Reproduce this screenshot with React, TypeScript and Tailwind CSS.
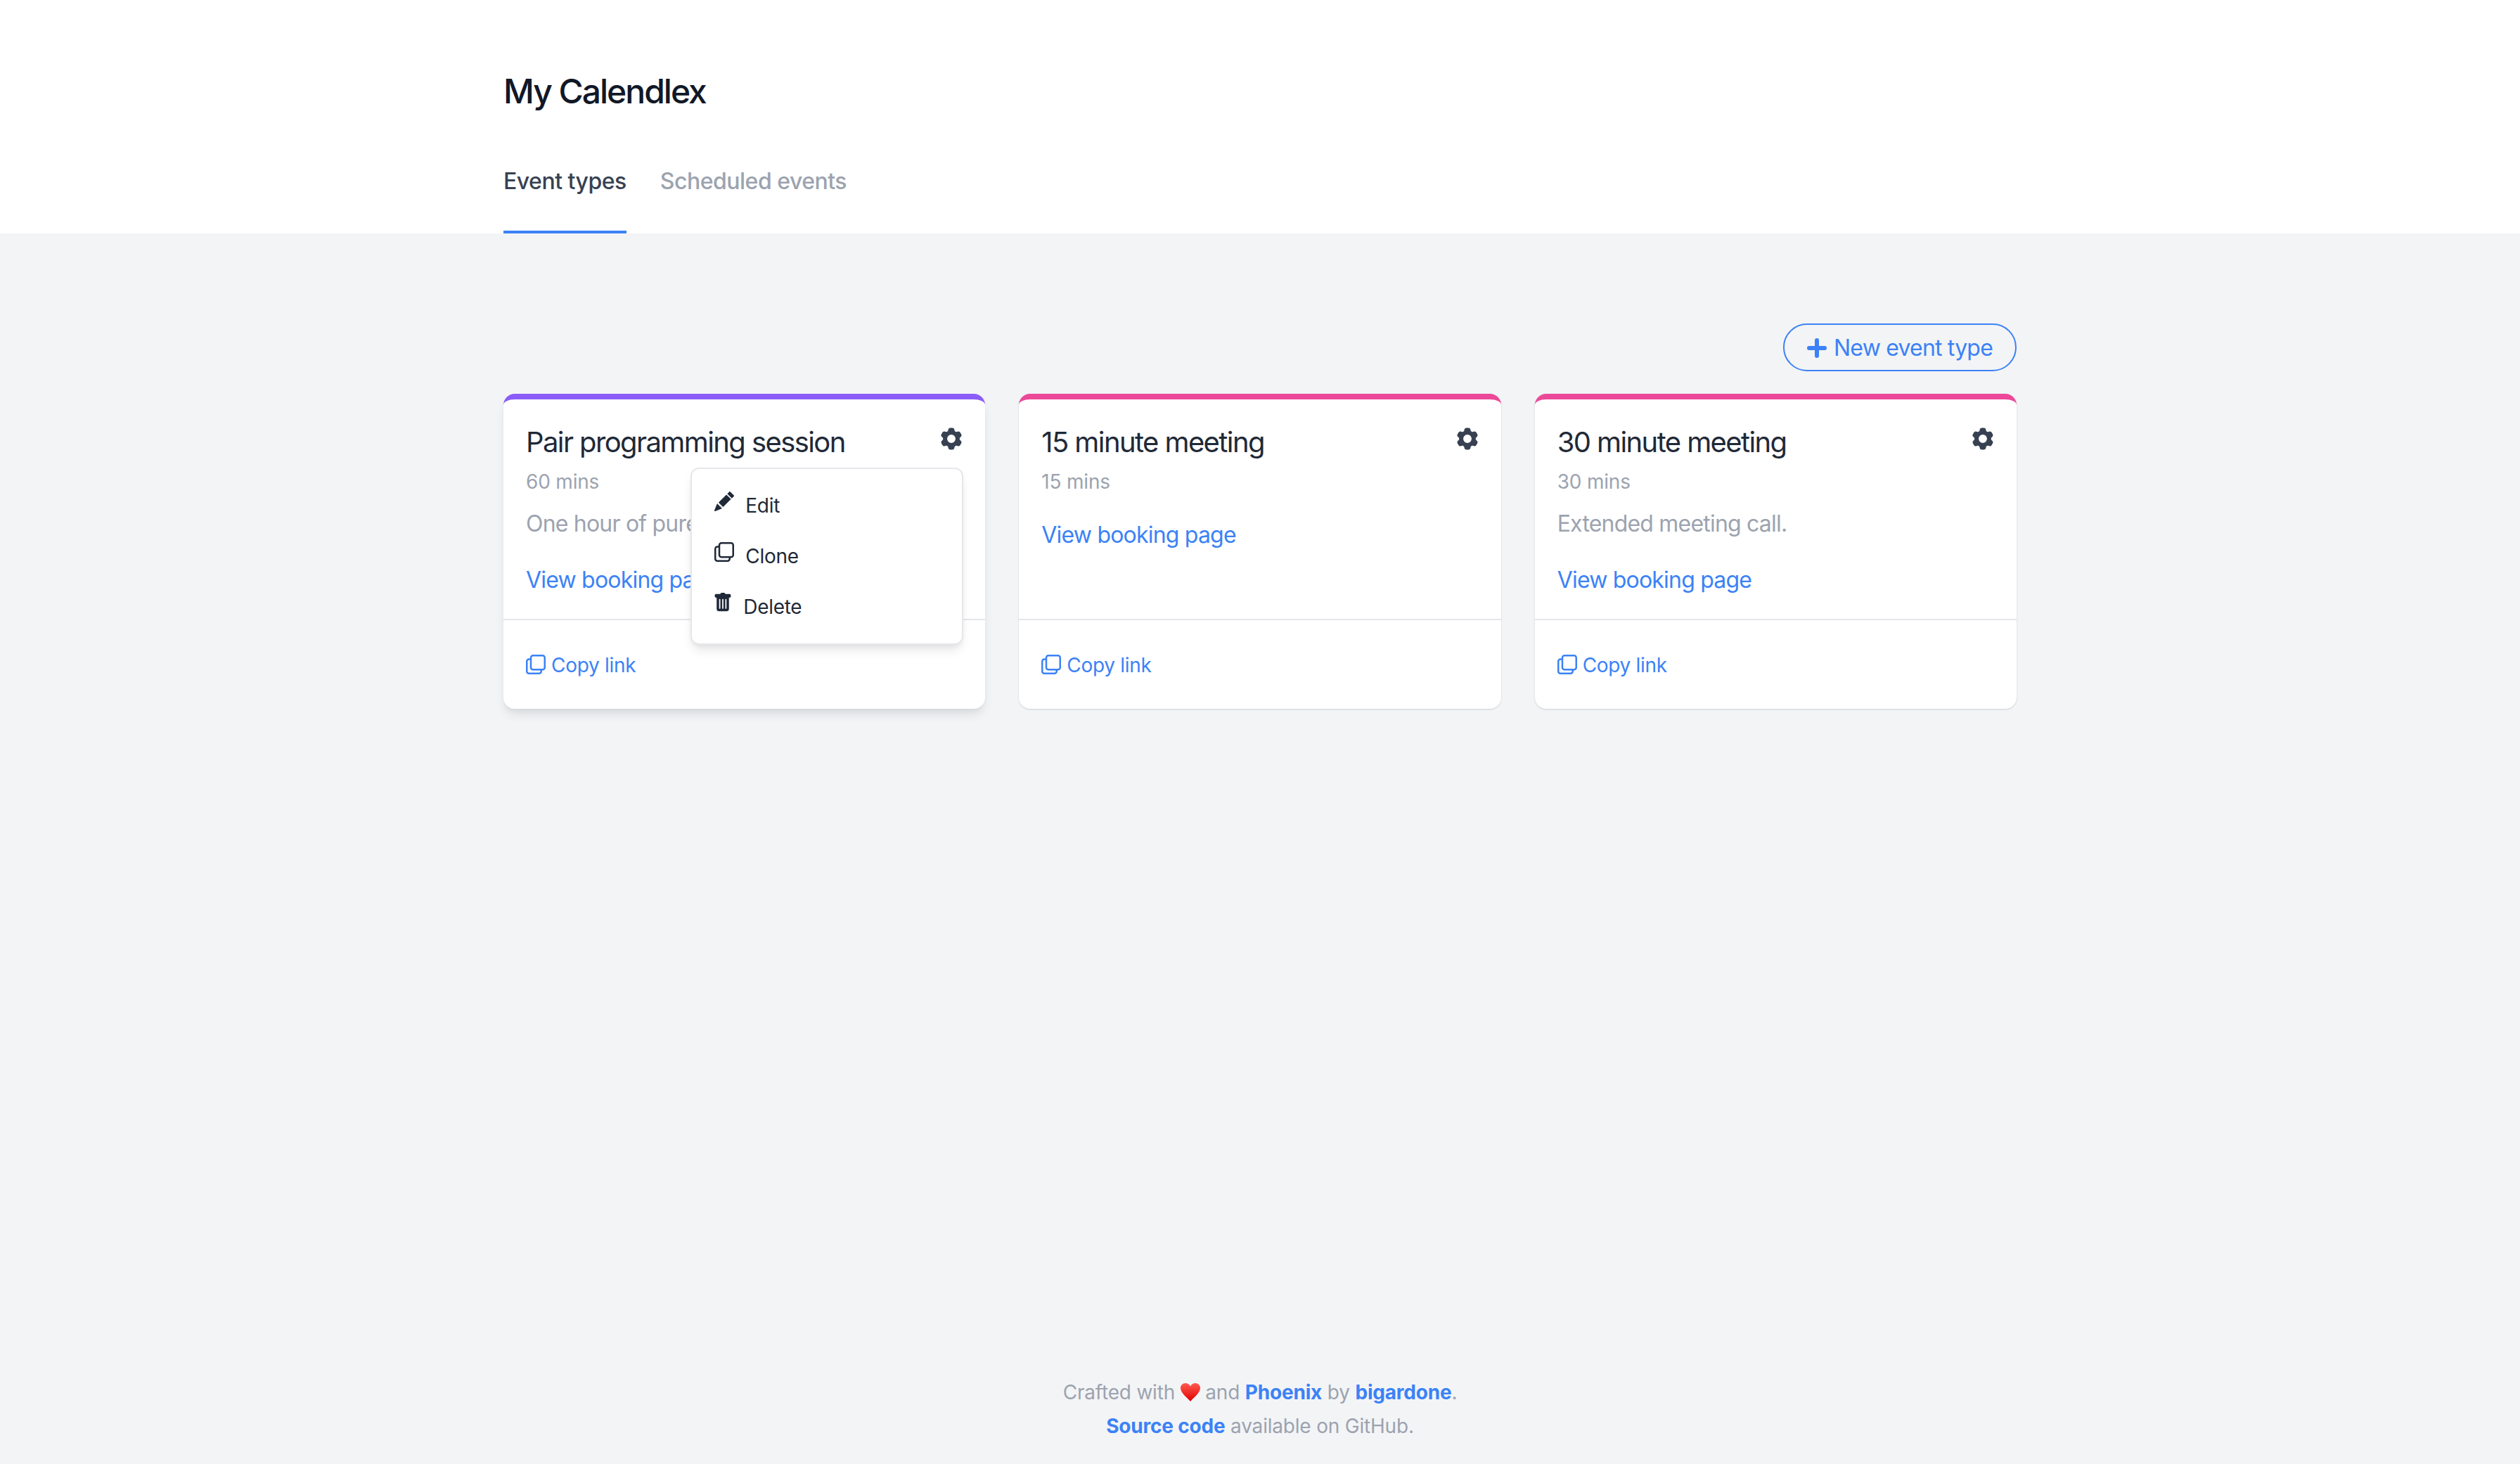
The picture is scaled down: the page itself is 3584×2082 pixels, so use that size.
import { BsPencilFill, BsTrashFill } from 'react-icons/bs'
import { HiCog6Tooth } from 'react-icons/hi2'

const eventTypes = [
  {
    name: 'Pair programming session',
    duration: '60 mins',
    description: 'One hour of pure pair programming.',
    border: 'border-[#8b5cf6]',
    open: true,
  },
  { name: '15 minute meeting', duration: '15 mins', border: 'border-[#ec4899]' },
  {
    name: '30 minute meeting',
    duration: '30 mins',
    description: 'Extended meeting call.',
    border: 'border-[#ec4899]',
  },
]

function CopyIcon() {
  return (
    <svg viewBox="0 0 28 28" fill="none" stroke="currentColor" strokeWidth="2.5" className="w-[28px] h-[28px] shrink-0">
      <rect x="7" y="1.250" width="19.750" height="20" rx="3" />
      <path d="M7 6.500H4.250a3 3 0 0 0-3 3v14.250a3 3 0 0 0 3 3h14.500a3 3 0 0 0 3-3V21.250" />
    </svg>
  )
}

function PlusIcon() {
  return (
    <svg viewBox="0 0 28 28" fill="currentColor" className="w-[28px] h-[28px] shrink-0">
      <path d="M14 0a3 3 0 0 1 3 3v8h8a3 3 0 0 1 0 6h-8v8a3 3 0 0 1-6 0v-8H3a3 3 0 0 1 0-6h8V3a3 3 0 0 1 3-3z" />
    </svg>
  )
}

function Heart() {
  return (
    <svg viewBox="0 0 28 26" className="inline-block w-[28px] h-[26px] align-[-3px]">
      <defs>
        <linearGradient id="heart" x1="0" y1="0" x2="0" y2="1">
          <stop offset="0" stopColor="#ff5a4f" />
          <stop offset="1" stopColor="#e00000" />
        </linearGradient>
      </defs>
      <path
        d="M14 26C9 20 0 14 0 7C0 3 3 0 7 0C10 0 12.500 1.500 14 4.500C15.500 1.500 18 0 21 0C25 0 28 3 28 7C28 14 19 20 14 26Z"
        fill="url(#heart)"
      />
    </svg>
  )
}

function Menu() {
  return (
    <div className="absolute top-[97px] right-[31px] w-[388px] py-4 bg-white rounded-xl border-2 border-[#e5e7eb] shadow-[0_10px_15px_-3px_rgba(0,0,0,0.1),0_4px_6px_-2px_rgba(0,0,0,0.05)] text-[28px] leading-[40px] tracking-[-0.3px] text-[#1f2937]">
      <div className="flex items-start gap-4 px-8 py-4">
        <BsPencilFill className="w-[28px] h-[28px]" />
        <span>Edit</span>
      </div>
      <div className="flex items-start gap-4 px-8 py-4">
        <CopyIcon />
        <span>Clone</span>
      </div>
      <div className="flex items-start gap-[15px] px-8 py-4">
        <BsTrashFill className="w-[28px] h-[28px] -ml-[2px]" />
        <span>Delete</span>
      </div>
    </div>
  )
}

export default function App() {
  return (
    <div className="flex flex-col min-h-[2082px] bg-[#f3f4f6] font-['Inter',sans-serif]">
      <header className="bg-white">
        <div className="w-[2152px] mx-auto pt-[98px]">
          <h1 className="text-[48px] leading-[64px] tracking-[-2px] font-medium text-[#111827]">My Calendlex</h1>
          <nav className="flex gap-12 mt-[72px] text-[32px] leading-[48px] tracking-[-0.5px] font-medium">
            <a className="pb-[46px] border-b-4 border-[#3b82f6] text-[#374151]">Event types</a>
            <a className="pb-[46px] border-b-4 border-transparent text-[#9ca3af]">Scheduled events</a>
          </nav>
        </div>
      </header>

      <main className="flex-1 w-[2152px] mx-auto pt-[128px]">
        <div className="flex justify-end">
          <button className="flex items-center gap-[10px] px-8 pt-[9px] pb-[7px] rounded-full border-2 border-[#3b82f6] text-[32px] leading-[48px] tracking-[-0.8px] text-[#3b82f6]">
            <PlusIcon />
            New event type
          </button>
        </div>

        <div className="grid grid-cols-3 gap-12 mt-8">
          {eventTypes.map((event) => (
            <div
              key={event.name}
              className={`relative flex flex-col h-[448px] bg-white rounded-2xl border-t-8 ${event.border} ${
                event.open
                  ? 'shadow-[0_10px_15px_-3px_rgba(0,0,0,0.1),0_4px_6px_-2px_rgba(0,0,0,0.05)]'
                  : 'shadow-[0_1px_3px_0_rgba(0,0,0,0.1),0_1px_2px_0_rgba(0,0,0,0.06)]'
              }`}
            >
              <div className="flex-1 px-8 pt-[33px] pb-[31px] border-b-2 border-[#e5e7eb]">
                <div className="flex justify-between items-start">
                  <h2 className="text-[40px] leading-[56px] tracking-[-1.6px] text-[#1f2937]">{event.name}</h2>
                  <HiCog6Tooth className="w-[38px] h-[38px] mt-[4px] -mr-[3px] text-[#374151]" />
                </div>
                <p className="mt-2 text-[28px] leading-[40px] tracking-[-0.2px] text-[#9ca3af]">{event.duration}</p>
                {event.description && (
                  <p className="mt-4 text-[32px] leading-[48px] tracking-[-0.8px] text-[#9ca3af] whitespace-nowrap overflow-hidden">
                    {event.description}
                  </p>
                )}
                <a className="block mt-8 text-[32px] leading-[48px] tracking-[-0.8px] text-[#3b82f6]">View booking page</a>
              </div>
              <div className="flex items-center gap-2 px-8 h-[126px] text-[28px] leading-[40px] tracking-[-0.3px] text-[#3b82f6]">
                <CopyIcon />
                <span className="pt-[2px]">Copy link</span>
              </div>
              {event.open && <Menu />}
            </div>
          ))}
        </div>
      </main>

      <footer className="pb-[30px] text-center text-[28px] leading-[48px] tracking-[-0.2px] text-[#9ca3af]">
        <p>
          Crafted with <Heart /> and <a className="font-bold text-[#3b82f6]">Phoenix</a> by{' '}
          <a className="font-bold text-[#3b82f6]">bigardone</a>.
        </p>
        <p>
          <a className="font-bold text-[#3b82f6]">Source code</a> available on GitHub.
        </p>
      </footer>
    </div>
  )
}
